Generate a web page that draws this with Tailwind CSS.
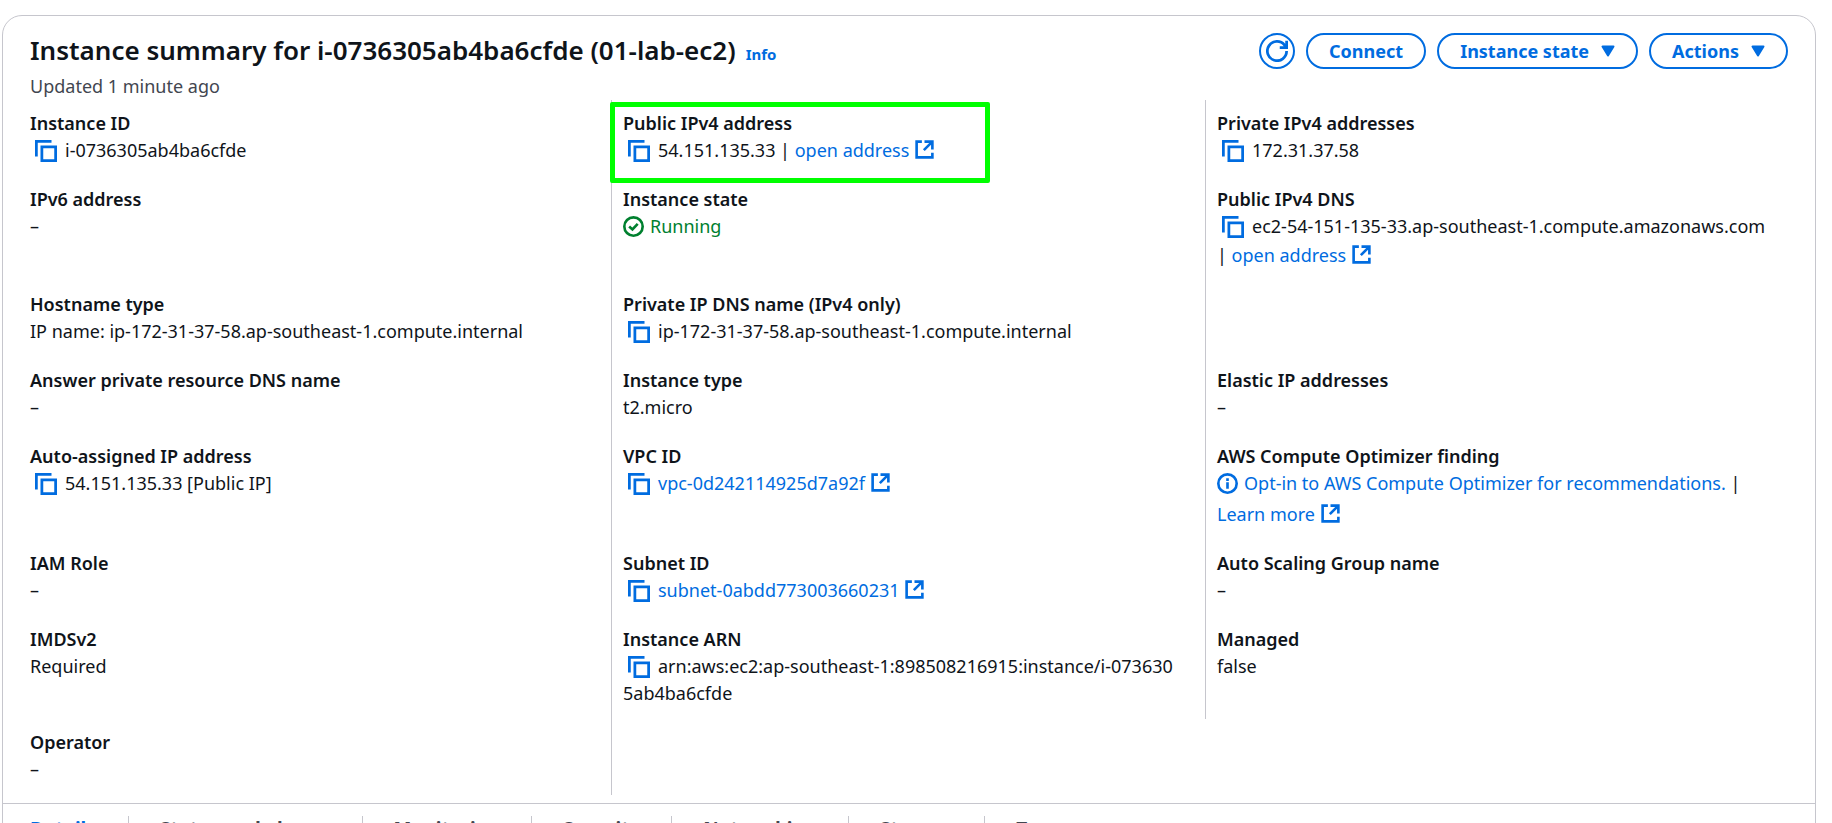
<!DOCTYPE html>
<html lang="en">
<head>
<meta charset="utf-8">
<title>Instance summary</title>
<script src="https://cdn.jsdelivr.net/npm/@tailwindcss/browser@4"></script>
</head>
<body class="bg-white font-['Noto_Sans','Open_Sans',sans-serif] text-[18px] leading-[27px] text-[#0f141a]">
<svg class="hidden" aria-hidden="true">
  <symbol id="copy" viewBox="0 0 16 16"><path d="M5 5h10v10H5zM1 12V1h11" fill="none" stroke="currentColor" stroke-width="2"/></symbol>
  <symbol id="ext" viewBox="0 0 16 16"><path d="M6 2H2v12h12v-3.500M8 2h6v6M14 2L7.500 8.500" fill="none" stroke="currentColor" stroke-width="2"/></symbol>
  <symbol id="refresh" viewBox="0 0 16 16"><path d="M15 8a7 7 0 1 1-1.500-4.300L15 5.500M10 5.500h5V.500" fill="none" stroke="currentColor" stroke-width="2"/></symbol>
  <symbol id="caret" viewBox="0 0 14 12"><path d="M1.500 1.500h11L7 10.500z" fill="currentColor" stroke="currentColor" stroke-width="2" stroke-linejoin="round"/></symbol>
  <symbol id="check" viewBox="0 0 16 16"><circle cx="8" cy="8" r="7" fill="none" stroke="currentColor" stroke-width="2"/><path d="M4.700 8l2.500 2.300 4-4.300" fill="none" stroke="currentColor" stroke-width="2"/></symbol>
  <symbol id="info" viewBox="0 0 16 16"><circle cx="8" cy="8" r="7" fill="none" stroke="currentColor" stroke-width="2"/><path d="M8 4v2M8 7v5" fill="none" stroke="currentColor" stroke-width="2"/></symbol>
</svg>
<main class="mt-[15px] mr-4 ml-[2px] rounded-[20px] border border-[#c6c6cd]">
  <header class="flex items-start justify-between pt-[17px] pr-[27px] pl-[27px]">
    <div>
      <div class="flex items-baseline gap-[10px]">
        <h1 class="text-[26px] leading-[34px] font-semibold">Instance summary for i-0736305ab4ba6cfde (01-lab-ec2)</h1>
        <a href="#info" class="text-[15px] font-bold text-[#006ce0]">Info</a>
      </div>
      <p class="mt-[5px] text-[#424650]">Updated 1 minute ago</p>
    </div>
    <div class="flex gap-[11px] font-bold text-[#006ce0]">
      <button aria-label="Refresh" class="flex size-9 items-center justify-center rounded-full border-2 border-[#006ce0]"><svg class="size-[22px]"><use href="#refresh"/></svg></button>
      <button class="h-9 rounded-full border-2 border-[#006ce0] px-[21px] leading-8">Connect</button>
      <button class="flex h-9 items-center gap-3 rounded-full border-2 border-[#006ce0] px-[21px] leading-8">Instance state<svg class="h-3 w-[14px]"><use href="#caret"/></svg></button>
      <button class="flex h-9 items-center gap-3 rounded-full border-2 border-[#006ce0] px-[21px] leading-8">Actions<svg class="h-3 w-[14px]"><use href="#caret"/></svg></button>
    </div>
  </header>

  <dl class="mx-[15px] grid grid-cols-3 pb-2 *:border-[#c6c6cd] *:px-[11px] *:pt-[10px] *:pb-3 *:nth-[3n+1]:pl-3 [&_a]:text-[#006ce0] [&_dt]:font-semibold">
    <div class="border-r"><dt>Instance ID</dt><dd><button aria-label="Copy" class="mr-2 ml-[5px] align-[-5px] leading-none text-[#006ce0]"><svg class="size-[22px]"><use href="#copy"/></svg></button>i-0736305ab4ba6cfde</dd></div>
    <div class="relative border-r"><dt>Public IPv4 address</dt><dd><button aria-label="Copy" class="mr-2 ml-[5px] align-[-5px] leading-none text-[#006ce0]"><svg class="size-[22px]"><use href="#copy"/></svg></button>54.151.135.33 | <a href="#open">open address <svg class="inline size-[21px] align-[-3px]"><use href="#ext"/></svg></a></dd><span class="absolute top-[2px] -left-[2px] h-[81px] w-[380px] rounded-[2px] border-[5px] border-[#00ff00]"></span></div>
    <div><dt>Private IPv4 addresses</dt><dd><button aria-label="Copy" class="mr-2 ml-[5px] align-[-5px] leading-none text-[#006ce0]"><svg class="size-[22px]"><use href="#copy"/></svg></button>172.31.37.58</dd></div>

    <div class="border-r"><dt>IPv6 address</dt><dd>–</dd></div>
    <div class="border-r"><dt>Instance state</dt><dd class="text-[#00802f]"><svg class="mr-[6px] inline size-[21px] align-[-4px]"><use href="#check"/></svg>Running</dd></div>
    <div><dt>Public IPv4 DNS</dt><dd><button aria-label="Copy" class="mr-2 ml-[5px] align-[-5px] leading-none text-[#006ce0]"><svg class="size-[22px]"><use href="#copy"/></svg></button>ec2-54-151-135-33.ap-southeast-1.compute.amazonaws.com<span class="block pt-[2px]">| <a href="#open-dns">open address <svg class="inline size-[21px] align-[-3px]"><use href="#ext"/></svg></a></span></dd></div>

    <div class="border-r"><dt>Hostname type</dt><dd>IP name: ip-172-31-37-58.ap-southeast-1.compute.internal</dd></div>
    <div class="border-r"><dt>Private IP DNS name (IPv4 only)</dt><dd><button aria-label="Copy" class="mr-2 ml-[5px] align-[-5px] leading-none text-[#006ce0]"><svg class="size-[22px]"><use href="#copy"/></svg></button>ip-172-31-37-58.ap-southeast-1.compute.internal</dd></div>
    <div></div>

    <div class="border-r"><dt>Answer private resource DNS name</dt><dd>–</dd></div>
    <div class="border-r"><dt>Instance type</dt><dd>t2.micro</dd></div>
    <div><dt>Elastic IP addresses</dt><dd>–</dd></div>

    <div class="border-r"><dt>Auto-assigned IP address</dt><dd><button aria-label="Copy" class="mr-2 ml-[5px] align-[-5px] leading-none text-[#006ce0]"><svg class="size-[22px]"><use href="#copy"/></svg></button>54.151.135.33 [Public IP]</dd></div>
    <div class="border-r"><dt>VPC ID</dt><dd><button aria-label="Copy" class="mr-2 ml-[5px] align-[-5px] leading-none text-[#006ce0]"><svg class="size-[22px]"><use href="#copy"/></svg></button><a href="#vpc">vpc-0d242114925d7a92f <svg class="inline size-[21px] align-[-3px]"><use href="#ext"/></svg></a></dd></div>
    <div><dt>AWS Compute Optimizer finding</dt><dd><a href="#optin"><svg class="mr-[6px] inline size-[21px] align-[-4px]"><use href="#info"/></svg>Opt-in to AWS Compute Optimizer for recommendations.</a> | <span class="block pt-1"><a href="#learn">Learn more <svg class="inline size-[21px] align-[-3px]"><use href="#ext"/></svg></a></span></dd></div>

    <div class="border-r"><dt>IAM Role</dt><dd>–</dd></div>
    <div class="border-r"><dt>Subnet ID</dt><dd><button aria-label="Copy" class="mr-2 ml-[5px] align-[-5px] leading-none text-[#006ce0]"><svg class="size-[22px]"><use href="#copy"/></svg></button><a href="#subnet">subnet-0abdd773003660231 <svg class="inline size-[21px] align-[-3px]"><use href="#ext"/></svg></a></dd></div>
    <div><dt>Auto Scaling Group name</dt><dd>–</dd></div>

    <div class="border-r"><dt>IMDSv2</dt><dd>Required</dd></div>
    <div class="border-r"><dt>Instance ARN</dt><dd><button aria-label="Copy" class="mr-2 ml-[5px] align-[-5px] leading-none text-[#006ce0]"><svg class="size-[22px]"><use href="#copy"/></svg></button>arn:aws:ec2:ap-southeast-1:898508216915:instance/i-073630<br>5ab4ba6cfde</dd></div>
    <div><dt>Managed</dt><dd>false</dd></div>

    <div class="border-r"><dt>Operator</dt><dd>–</dd></div>
  </dl>

  <nav class="flex border-t border-[#c6c6cd] pl-[27px] text-[19px] font-bold text-[#424650]">
    <button class="pt-3 pr-8 text-[#006ce0]">Details</button>
    <span class="mt-3 h-6 w-px bg-[#c6c6cd]"></span>
    <button class="px-[31px] pt-3">Status and alarms</button>
    <span class="mt-3 h-6 w-px bg-[#c6c6cd]"></span>
    <button class="px-[31px] pt-3">Monitoring</button>
    <span class="mt-3 h-6 w-px bg-[#c6c6cd]"></span>
    <button class="px-[31px] pt-3">Security</button>
    <span class="mt-3 h-6 w-px bg-[#c6c6cd]"></span>
    <button class="px-[31px] pt-3">Networking</button>
    <span class="mt-3 h-6 w-px bg-[#c6c6cd]"></span>
    <button class="px-[31px] pt-3">Storage</button>
    <span class="mt-3 h-6 w-px bg-[#c6c6cd]"></span>
    <button class="px-[31px] pt-3">Tags</button>
  </nav>
</main>
</body>
</html>
